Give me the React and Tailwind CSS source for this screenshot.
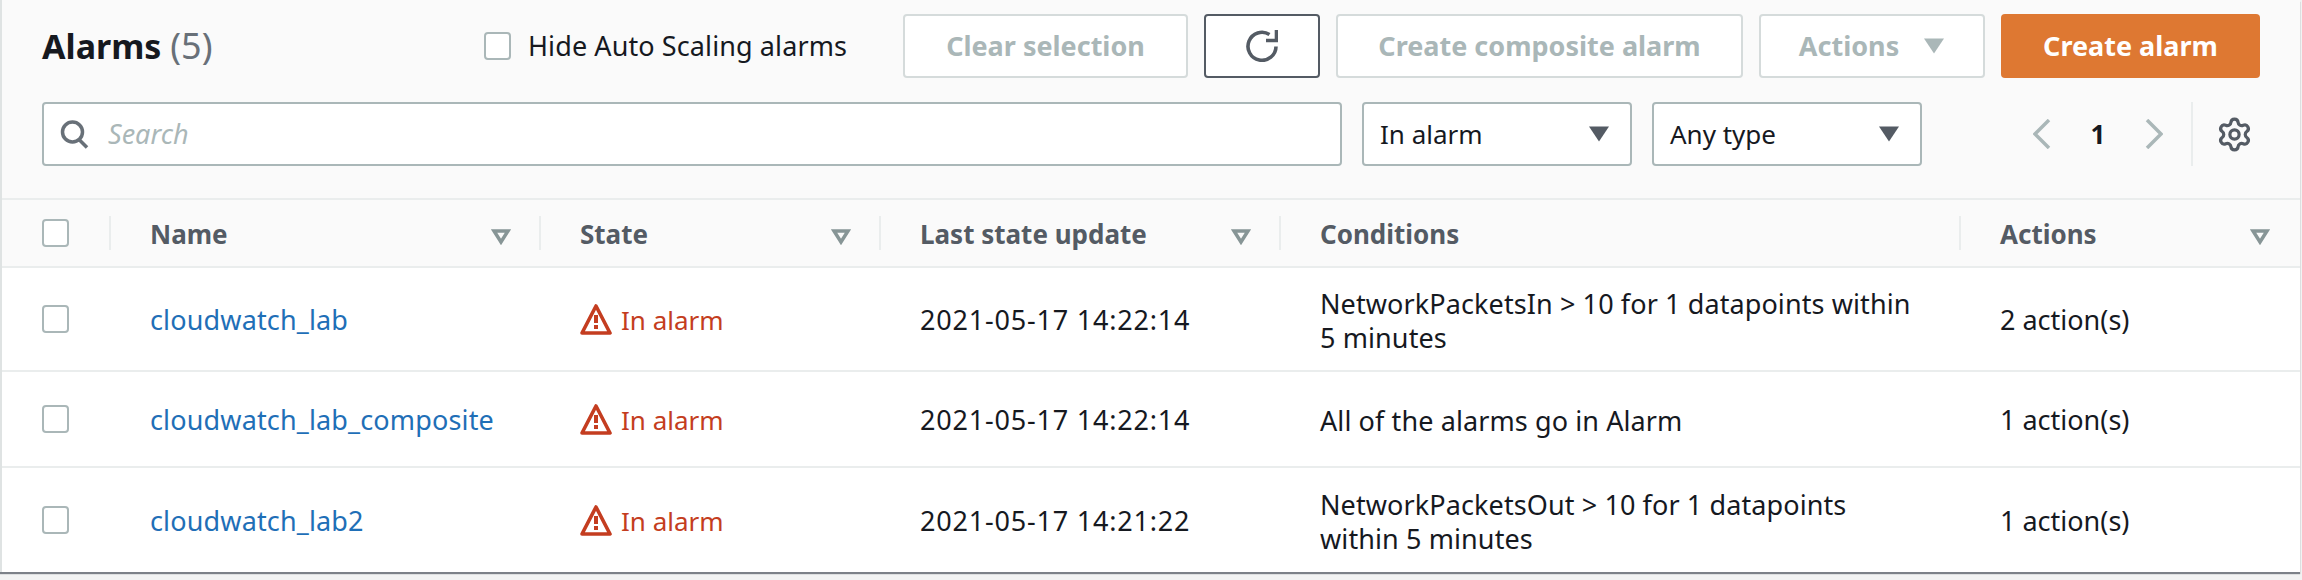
import { Settings } from 'lucide-react'

const rows = [
  { name: 'cloudwatch_lab', updated: '2021-05-17 14:22:14', conditions: ['NetworkPacketsIn > 10 for 1 datapoints within', '5 minutes'], actions: '2 action(s)', rowClass: 'h-[102px]' },
  { name: 'cloudwatch_lab_composite', updated: '2021-05-17 14:22:14', conditions: ['All of the alarms go in Alarm'], actions: '1 action(s)', rowClass: 'h-[94px]' },
  { name: 'cloudwatch_lab2', updated: '2021-05-17 14:21:22', conditions: ['NetworkPacketsOut > 10 for 1 datapoints', 'within 5 minutes'], actions: '1 action(s)', rowClass: 'h-[104px]' },
]

const gridCols = 'grid grid-cols-[107px_430px_340px_400px_680px_1fr]'

function Checkbox() {
  return <span className="block h-[28px] w-[27px] shrink-0 rounded-[4px] border-2 border-[#aab7b8] bg-white" />
}

function Caret({ className }) {
  return (
    <svg viewBox="0 0 22 16" className={`h-4 w-[22px] shrink-0 ${className}`} fill="currentColor">
      <path d="M1 0.5H21L11 15.5Z" />
    </svg>
  )
}

function SortIcon() {
  return (
    <svg viewBox="0 0 20 16" className="h-4 w-5 shrink-0 text-[#879596]" fill="none" stroke="currentColor" strokeWidth="3.5">
      <path d="M3 2H17L10 13Z" />
    </svg>
  )
}

function WarningIcon() {
  return (
    <svg viewBox="0 0 32 32" className="h-8 w-8 shrink-0 text-[#c43d20]">
      <path d="M16 3L30 30H2Z" fill="none" stroke="currentColor" strokeWidth="3.6" strokeLinejoin="round" />
      <rect x="14" y="12" width="4" height="8" fill="currentColor" />
      <rect x="14" y="22" width="4" height="4" fill="currentColor" />
    </svg>
  )
}

function SearchIcon() {
  return (
    <svg viewBox="0 0 29 29" className="h-[29px] w-[29px] shrink-0 text-[#687078]" fill="none" stroke="currentColor" strokeWidth="3.5">
      <circle cx="12.5" cy="12" r="10" />
      <path d="M19 19.5L27 27.5" />
    </svg>
  )
}

function RefreshIcon() {
  return (
    <svg viewBox="0 0 32 32" className="h-8 w-8 text-[#545b64]" fill="none" stroke="currentColor" strokeWidth="3.6">
      <path d="M30 16.5A14 14 0 1 1 23.5 4.5" />
      <path d="M20 10.5H30.5V0" />
    </svg>
  )
}

function Chevron({ flip }) {
  return (
    <svg viewBox="0 0 18 30" className="h-[30px] w-[18px] shrink-0 text-[#aab7b8]" fill="none" stroke="currentColor" strokeWidth="3.5">
      <path d={flip ? 'M2 1L16 15L2 29' : 'M16 1L2 15L16 29'} />
    </svg>
  )
}

function OutlineButton({ width, children }) {
  return (
    <div className={`flex h-16 items-center justify-center gap-6 rounded-[4px] border-2 border-[#d5dbdb] bg-white text-[27px] font-bold text-[#aab7b8] ${width}`}>
      {children}
    </div>
  )
}

function SelectBox({ label }) {
  return (
    <div className="flex h-16 w-[270px] items-center justify-between rounded-[4px] border-2 border-[#aab7b8] bg-white pl-4 pr-5 text-[#16191f]">
      <span>{label}</span>
      <Caret className="text-[#545b64]" />
    </div>
  )
}

function HeaderCell({ label, sortable = true, cellClass }) {
  return (
    <div className={`flex h-[34px] items-center justify-between border-l-2 border-[#eaeded] ${cellClass}`}>
      <span className="translate-y-px">{label}</span>
      {sortable && <span className="mt-2"><SortIcon /></span>}
    </div>
  )
}

export default function App() {
  return (
    <div className="min-h-[580px] bg-[#f2f3f3] pb-2 pr-[2px] font-['Noto_Sans',sans-serif] text-[26px] leading-[34px]">
      <div className="border-l-2 border-[#dfe3e3] bg-white shadow-[0_2px_1px_rgba(84,91,100,0.75)]">
        <div className="bg-[#fafafa] pl-10 pr-10 pt-[14px]">
          <div className="flex h-16 items-center">
            <h2 className="w-[442px] text-[34px] font-bold text-[#16191f]">
              Alarms <span className="text-[36px] font-normal text-[#687078]">(5)</span>
            </h2>
            <label className="flex items-center gap-[17px] text-[27px] tracking-[0.1px] text-[#16191f]">
              <Checkbox />
              Hide Auto Scaling alarms
            </label>
            <div className="ml-auto flex gap-4">
              <OutlineButton width="w-[285px]">Clear selection</OutlineButton>
              <div className="flex h-16 w-[116px] items-center justify-center rounded-[4px] border-2 border-[#545b64] bg-white">
                <RefreshIcon />
              </div>
              <OutlineButton width="w-[407px]">Create composite alarm</OutlineButton>
              <OutlineButton width="w-[226px]">
                Actions
                <Caret className="text-[#aab7b8]" />
              </OutlineButton>
              <div className="flex h-16 w-[259px] items-center justify-center rounded-[4px] bg-[#de7832] text-[27px] font-bold text-white">
                Create alarm
              </div>
            </div>
          </div>

          <div className="mt-6 flex h-16 items-center gap-5">
            <div className="flex h-16 w-[1300px] items-center gap-[19px] rounded-[4px] border-2 border-[#aab7b8] bg-white pl-4">
              <SearchIcon />
              <span className="text-[27px] italic text-[#aab7b8]">Search</span>
            </div>
            <SelectBox label="In alarm" />
            <SelectBox label="Any type" />
            <div className="ml-[91px] flex h-16 items-center">
              <Chevron />
              <span className="w-[94px] text-center font-bold text-[#16191f]">1</span>
              <Chevron flip />
              <span className="ml-7 h-16 w-[2px] bg-[#eaeded]" />
              <Settings className="ml-[23px] h-[37px] w-[37px] text-[#545b64]" strokeWidth={2.1} />
            </div>
          </div>
          <div className="h-8" />
        </div>

        <div className={`${gridCols} h-[70px] items-center border-y-2 border-[#eaeded] bg-[#fafafa] font-bold text-[#545b64]`}>
          <div className="pl-10"><Checkbox /></div>
          <HeaderCell label="Name" cellClass="pl-[39px] pr-7" />
          <HeaderCell label="State" cellClass="pl-[39px] pr-7" />
          <HeaderCell label="Last state update" cellClass="pl-[39px] pr-7" />
          <HeaderCell label="Conditions" sortable={false} cellClass="pl-[39px] pr-7" />
          <HeaderCell label="Actions" cellClass="pl-[39px] pr-[30px]" />
        </div>

        {rows.map((row, i) => (
          <div key={row.name} className={`${gridCols} items-center ${row.rowClass} ${i < rows.length - 1 ? 'box-content border-b-2 border-[#eaeded]' : ''} text-[27px] text-[#16191f]`}>
            <div className="pl-10"><Checkbox /></div>
            <a className="translate-y-px pl-[41px] tracking-[0.15px] text-[#1f6fb7]">{row.name}</a>
            <div className="flex items-center gap-[9px] pl-[41px] text-[26px] text-[#c43d20]">
              <WarningIcon />
              <span className="translate-y-px">In alarm</span>
            </div>
            <div className="translate-y-px pl-[41px] tracking-[0.8px]">{row.updated}</div>
            <div className="translate-y-[2px] pl-[41px] leading-[34px] tracking-[0.1px]">
              {row.conditions.map((line) => <div key={line}>{line}</div>)}
            </div>
            <div className="translate-y-px pl-[41px]">{row.actions}</div>
          </div>
        ))}
      </div>
    </div>
  )
}
